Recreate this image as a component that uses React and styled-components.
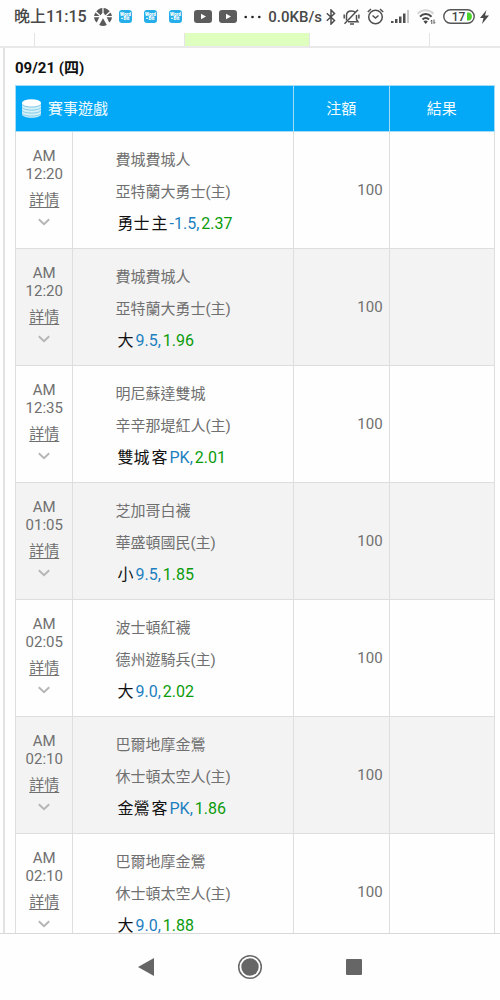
import React, { useState } from "react";
import styled, { createGlobalStyle } from "styled-components";

const GlobalStyle = createGlobalStyle`
  * {
    box-sizing: border-box;
  }
  body {
    margin: 0;
    background: #fefefe;
    color: #707070;
    font-family: Roboto, "Noto Sans CJK TC", sans-serif;
    font-size: 15px;
  }
`;

const Screen = styled.div`
  display: flex;
  flex-direction: column;
  height: 100vh;
  overflow: hidden;
`;

const StatusBar = styled.header`
  display: flex;
  flex: none;
  align-items: center;
  justify-content: space-between;
  height: 33px;
  padding: 0 11px 0 14px;
  color: #484848;
  font-weight: 500;
  white-space: nowrap;
`;
const StatusGroup = styled.div`
  display: flex;
  align-items: center;
  gap: ${(props) => props.$gap}px;
`;
const Clock = styled.span`
  font-size: 16px;
  line-height: 20px;
`;
const Speed = styled.span`
  font-size: 15px;
  line-height: 20px;
`;
const Icon = styled.svg`
  display: block;
  flex: none;
`;

const TabStrip = styled.div`
  display: grid;
  flex: none;
  grid-template-columns: 7% 30% 25% 24% 14%;
  height: 15px;
  border-bottom: 2px solid #e9e9e9;
`;
const Tab = styled.div`
  border-right: 1px solid #e4e4e4;
  background: ${(props) => (props.$active ? "#deffbd" : "transparent")};

  &:last-child {
    border-right: none;
  }
`;

const Content = styled.main`
  flex: 1;
  min-height: 0;
  margin-left: 3px;
  padding: 10px 5px 0 10px;
  border-left: 2px solid #e2e2e2;
  overflow: hidden;
`;
const DateHeading = styled.h1`
  margin: 0 0 7px;
  color: #111;
  font-size: 15px;
  font-weight: 700;
  line-height: 20px;
`;

const BetTable = styled.table`
  width: 100%;
  table-layout: fixed;
  border-collapse: collapse;
`;
const Col = styled.col`
  width: ${(props) => props.$width};
`;
const HeadCell = styled.th`
  height: 46px;
  padding: 0 6px;
  border: 1px solid #a5dcf5;
  background: #03a8f6;
  color: #f2fbff;
  font-weight: 400;
  line-height: 20px;
`;
const HeadTitle = styled.span`
  display: flex;
  align-items: center;
  gap: 7px;
`;
const Row = styled.tr`
  height: 117px;
  background: ${(props) => (props.$shaded ? "#f3f3f3" : "#fefefe")};
`;
const Cell = styled.td`
  padding: 0;
  border: 1px solid #dedede;
`;
const TimeCell = styled(Cell)`
  padding-top: 15px;
  line-height: 18px;
  text-align: center;
  vertical-align: top;
`;
const AmountCell = styled(Cell)`
  padding-right: 6px;
  text-align: right;
`;
const MatchCell = styled(Cell)`
  padding: 3px 0 0 42px;
  line-height: 32px;
  white-space: nowrap;
`;
const DetailLink = styled.a`
  display: block;
  margin-top: 8px;
  color: inherit;
  text-decoration: underline;
  text-underline-offset: 2px;
`;
const ToggleButton = styled.button`
  display: block;
  margin: 9px auto 0;
  padding: 0;
  border: none;
  background: none;
  cursor: pointer;
`;
const Pick = styled.div`
  display: flex;
  gap: 2px;
  padding-left: 2px;
  color: #111;
  font-size: 16px;
`;
const Handicap = styled.span`
  color: #1c7fc0;
`;
const Odds = styled.span`
  color: #0b9b0b;
`;

const NavBar = styled.nav`
  display: flex;
  flex: none;
  align-items: center;
  justify-content: center;
  gap: 82px;
  height: 67px;
  border-top: 1px solid #d8d8d8;
`;
const NavButton = styled.button`
  display: flex;
  padding: 0;
  border: none;
  background: none;
  cursor: pointer;
`;

const bets = [
  { time: "12:20", away: "費城費城人", home: "亞特蘭大勇士(主)", pick: ["勇士", "主"], line: "-1.5,", odds: "2.37" },
  { time: "12:20", away: "費城費城人", home: "亞特蘭大勇士(主)", pick: ["大"], line: "9.5,", odds: "1.96" },
  { time: "12:35", away: "明尼蘇達雙城", home: "辛辛那堤紅人(主)", pick: ["雙城", "客"], line: "PK,", odds: "2.01" },
  { time: "01:05", away: "芝加哥白襪", home: "華盛頓國民(主)", pick: ["小"], line: "9.5,", odds: "1.85" },
  { time: "02:05", away: "波士頓紅襪", home: "德州遊騎兵(主)", pick: ["大"], line: "9.0,", odds: "2.02" },
  { time: "02:10", away: "巴爾地摩金鶯", home: "休士頓太空人(主)", pick: ["金鶯", "客"], line: "PK,", odds: "1.86" },
  { time: "02:10", away: "巴爾地摩金鶯", home: "休士頓太空人(主)", pick: ["大"], line: "9.0,", odds: "1.88" },
];

const WheelIcon = () => (
  <Icon width="18" height="18" viewBox="0 0 18 18" fill="#5a5a5a">
    <path d="M8.4 0v5L6.600 7.200 2.300 3.200C4 1.200 6 .2 8.400 0z" />
    <path d="M9.600 0v5l1.800 2.200 4.300-4C14 1.200 12 .2 9.600 0z" />
    <path d="M1.500 4.400L5.600 8H.1c.1-1.400.6-2.500 1.400-3.600zM16.500 4.400L12.400 8h5.500c-.1-1.400-.6-2.500-1.400-3.600z" />
    <path d="M.1 9.300h5.200l-2.500 5.300C1.100 13.200.2 11.300.1 9.300zM17.900 9.300h-5.200l2.500 5.300c1.700-1.400 2.600-3.300 2.700-5.300z" />
    <path d="M9 10.300l3.800 6.600c-2.500 1.400-5.100 1.400-7.600 0z" />
  </Icon>
);

const WordBitIcon = () => (
  <Icon width="13" height="13" viewBox="0 0 13 13">
    <rect width="13" height="13" rx="3" fill="#25aee8" />
    <g fill="#fff" fontFamily="Roboto, sans-serif" fontWeight="900" fontSize="4.6" textAnchor="middle">
      <text x="6.5" y="5.8">Word</text>
      <text x="7.5" y="10.4">Bit</text>
    </g>
    <path d="M2 8.3h2" stroke="#fff" />
  </Icon>
);

const VideoIcon = () => (
  <Icon width="18" height="13" viewBox="0 0 18 13">
    <rect width="18" height="13" rx="3" fill="#5c5c5c" />
    <path d="M7 3.7v5.6l5-2.8z" fill="#fff" />
  </Icon>
);

const DotsIcon = () => (
  <Icon width="17" height="4" viewBox="0 0 17 4" fill="#222">
    <circle cx="1.7" cy="2" r="1.3" />
    <circle cx="8.5" cy="2" r="1.3" />
    <circle cx="15.3" cy="2" r="1.3" />
  </Icon>
);

const BluetoothIcon = () => (
  <Icon width="10" height="16" viewBox="0 0 10 16" fill="none" stroke="#4c4c4c" strokeWidth="1.5">
    <path d="M.8 4.300l7.700 7.200L5 15V1l3.500 3.500-7.700 7.200" />
  </Icon>
);

const MutedBellIcon = () => (
  <Icon width="17" height="16" viewBox="0 0 17 16" fill="none" stroke="#505050" strokeWidth="1.5">
    <path d="M3.500 11.500V6.500C3.500 3.500 5.500 2 8.500 2c1.700 0 3 .4 4 1.500M13.500 6v4.500l1.500 2.300H5M7 15h4" />
    <path d="M15 .8L1.500 14.800M1.200 5.500v4M15.900 5.500v4" />
  </Icon>
);

const AlarmIcon = () => (
  <Icon width="17" height="17" viewBox="0 0 17 17" fill="none" stroke="#505050" strokeWidth="1.5">
    <circle cx="8.500" cy="9" r="6.800" />
    <path d="M5.500 7.500l3 2.500 3-2.500M.8 4L4 1M13 1l3.200 3" />
  </Icon>
);

const SignalIcon = () => (
  <Icon width="19" height="13" viewBox="0 0 19 13" fill="#505050">
    <path d="M0 11h2.500v2H0zM4 9h2.500v4H4zM8 6.500h2.500V13H8zM12 3.500h2.500V13H12z" />
    <path d="M16 0h2v13h-2z" fill="#c8c8c8" />
  </Icon>
);

const WifiIcon = () => (
  <Icon width="19" height="16" viewBox="0 0 19 16" fill="none" stroke="#484848" strokeWidth="2">
    <path d="M.8 4.800C5 .2 12 .2 16.500 4.800" stroke="#d5d5d5" />
    <path d="M3 7.700c3.200-3.600 8.200-3.600 11.500 0M5.500 10.500c2-2.100 4.600-2.100 6.500 0" />
    <path d="M6.500 12.500c1.300-1.300 3-1.300 4.300 0L8.700 15z" fill="#484848" stroke="none" />
    <path d="M14.800 15v-4l-1.200 1.300M17 10.500v4l1.200-1.300" strokeWidth=".9" />
  </Icon>
);

const BatteryIcon = () => (
  <Icon width="32" height="15" viewBox="0 0 32 15">
    <rect x=".8" y=".8" width="30.400" height="13.400" rx="6.700" fill="none" stroke="#555" strokeWidth="1.400" />
    <path d="M24 3.500h1.500c4.500 0 4.500 8 0 8H24z" fill="#4bd22c" />
    <text x="15.500" y="12" fill="#444" fontFamily="Roboto, sans-serif" fontSize="12" fontWeight="500" textAnchor="middle">
      17
    </text>
  </Icon>
);

const BoltIcon = () => (
  <Icon width="9" height="14" viewBox="0 0 9 14">
    <path d="M6.500 0L0 8h3.500L2 14l7-8.500H5z" fill="#484848" />
  </Icon>
);

const ChipsIcon = () => (
  <Icon width="19" height="19" viewBox="0 0 19 19">
    <path d="M0 3.500v11.500c0 5 19 5 19 0V3.500z" fill="#d5f1fa" />
    <g fill="none" stroke="#6cc0de" strokeWidth=".8">
      <path d="M0 5.500c2 3.500 17 3.500 19 0M0 8.500c2 3.500 17 3.500 19 0M0 11.500c2 3.500 17 3.500 19 0M0 14.500c2 3.500 17 3.500 19 0" />
    </g>
    <ellipse cx="9.500" cy="3.700" rx="9.500" ry="3.500" fill="#fff" />
  </Icon>
);

const ChevronIcon = () => (
  <Icon width="12" height="8" viewBox="0 0 12 8" fill="none" stroke="#b5b5b5" strokeWidth="1.900">
    <path d="M.8 1.200L6 6.200l5.200-5" />
  </Icon>
);

const BetRow = ({ bet, shaded }) => {
  const [open, setOpen] = useState(false);

  return (
    <Row $shaded={shaded}>
      <TimeCell>
        <div>AM</div>
        <div>{bet.time}</div>
        <DetailLink href="#detail">詳情</DetailLink>
        <ToggleButton type="button" aria-label="展開" aria-expanded={open} onClick={() => setOpen(!open)}>
          <ChevronIcon />
        </ToggleButton>
      </TimeCell>
      <MatchCell>
        <div>{bet.away}</div>
        <div>{bet.home}</div>
        <Pick>
          {bet.pick.map((word) => (
            <span key={word}>{word}</span>
          ))}
          <Handicap>{bet.line}</Handicap>
          <Odds>{bet.odds}</Odds>
        </Pick>
      </MatchCell>
      <AmountCell>100</AmountCell>
      <Cell />
    </Row>
  );
};

const App = () => (
  <Screen>
    <GlobalStyle />
    <StatusBar>
      <StatusGroup $gap={7}>
        <Clock>晚上11:15</Clock>
        <WheelIcon />
        <StatusGroup $gap={12}>
          <WordBitIcon />
          <WordBitIcon />
          <WordBitIcon />
          <StatusGroup $gap={7}>
            <VideoIcon />
            <VideoIcon />
            <DotsIcon />
          </StatusGroup>
        </StatusGroup>
      </StatusGroup>
      <StatusGroup $gap={7}>
        <StatusGroup $gap={4}>
          <Speed>0.0KB/s</Speed>
          <BluetoothIcon />
        </StatusGroup>
        <MutedBellIcon />
        <AlarmIcon />
        <SignalIcon />
        <WifiIcon />
        <StatusGroup $gap={5}>
          <BatteryIcon />
          <BoltIcon />
        </StatusGroup>
      </StatusGroup>
    </StatusBar>
    <TabStrip>
      <Tab />
      <Tab />
      <Tab $active />
      <Tab />
      <Tab />
    </TabStrip>
    <Content>
      <DateHeading>09/21 (四)</DateHeading>
      <BetTable>
        <colgroup>
          <Col $width="12%" />
          <Col $width="46%" />
          <Col $width="20%" />
          <Col $width="22%" />
        </colgroup>
        <thead>
          <tr>
            <HeadCell colSpan={2} scope="col">
              <HeadTitle>
                <ChipsIcon />
                賽事遊戲
              </HeadTitle>
            </HeadCell>
            <HeadCell scope="col">注額</HeadCell>
            <HeadCell scope="col">結果</HeadCell>
          </tr>
        </thead>
        <tbody>
          {bets.map((bet, index) => (
            <BetRow key={index} bet={bet} shaded={index % 2 === 1} />
          ))}
        </tbody>
      </BetTable>
    </Content>
    <NavBar>
      <NavButton type="button" aria-label="返回">
        <Icon width="18" height="20" viewBox="0 0 18 20">
          <path d="M17 1v18L1 10z" fill="#666" />
        </Icon>
      </NavButton>
      <NavButton type="button" aria-label="主畫面">
        <Icon width="26" height="26" viewBox="0 0 26 26">
          <circle cx="13" cy="13" r="11.300" fill="none" stroke="#666" strokeWidth="1.500" />
          <circle cx="13" cy="13" r="8.700" fill="#666" />
        </Icon>
      </NavButton>
      <NavButton type="button" aria-label="最近使用">
        <Icon width="18" height="18" viewBox="0 0 18 18">
          <rect x="1" y="1" width="16" height="16" rx="1" fill="#666" />
        </Icon>
      </NavButton>
    </NavBar>
  </Screen>
);

export default App;
